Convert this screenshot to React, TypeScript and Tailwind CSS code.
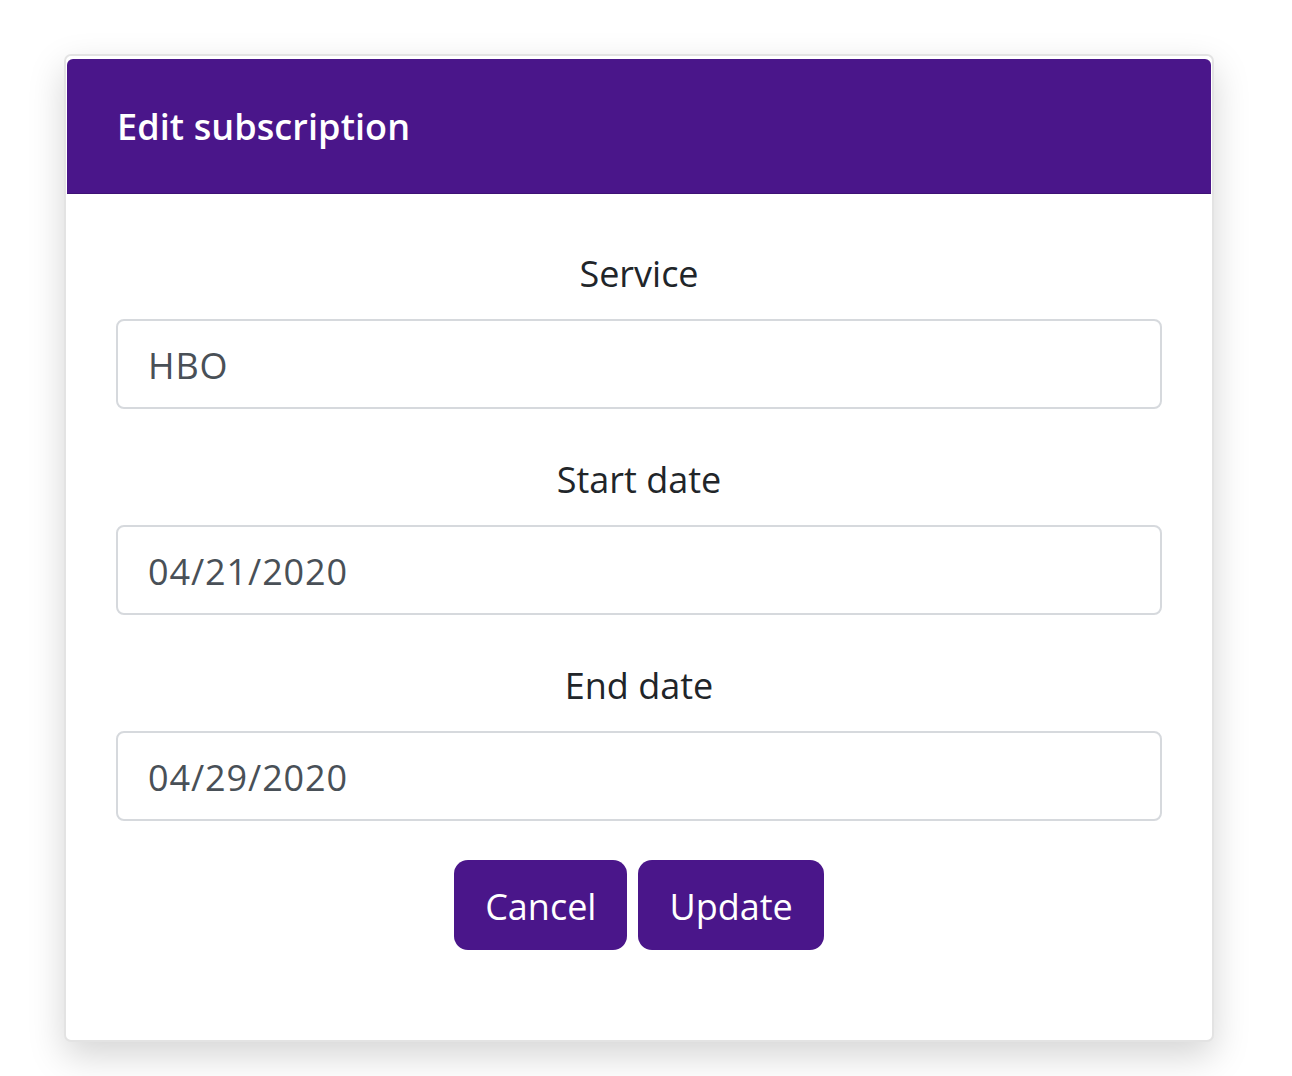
import React from 'react';

const font = { fontFamily: '"Open Sans", "Noto Sans", sans-serif' };

const Field: React.FC<{ label: string; value: string; first?: boolean }> = ({ label, value, first }) => {
  return (
    <div className={first ? '' : 'mt-[44px]'}>
      <div className="text-center text-[36px] leading-[52px] text-[#212529] pt-px">{label}</div>
      <div className="mt-[19px] h-[90px] flex items-center px-[30px] pt-[4px] border-2 border-[#d6d9dd] rounded-[8px] bg-white text-[36px] tracking-[0.9px] text-[#495057]">
        {value}
      </div>
    </div>
  );
};

export default function App() {
  return (
    <div className="min-h-screen bg-white pt-[54px] pl-[64px]" style={font}>
      <div className="w-[1150px] border-2 border-[#e3e3e3] rounded-[7px] bg-white pt-[3px] px-px shadow-[0_14px_36px_rgba(0,0,0,0.17)]">
        {/* Header */}
        <div className="h-[135px] bg-[#4a168a] rounded-t-[6px] border-b border-[#3e1275] flex items-center pl-[50px]">
          <h1 className="text-[36px] font-semibold text-white tracking-[0.1px] pt-[2px]">Edit subscription</h1>
        </div>

        {/* Body */}
        <div className="px-[49px] pt-[53px] pb-[90px]">
          <Field label="Service" value="HBO" first />
          <Field label="Start date" value="04/21/2020" />
          <Field label="End date" value="04/29/2020" />

          <div className="mt-[39px] flex justify-center gap-[11px]">
            <button className="h-[90px] px-[31px] pt-[3px] rounded-[14px] bg-[#4a168a] text-white text-[36px]">Cancel</button>
            <button className="h-[90px] px-[31px] pt-[3px] rounded-[14px] bg-[#4a168a] text-white text-[36px]">Update</button>
          </div>
        </div>
      </div>
    </div>
  );
}
